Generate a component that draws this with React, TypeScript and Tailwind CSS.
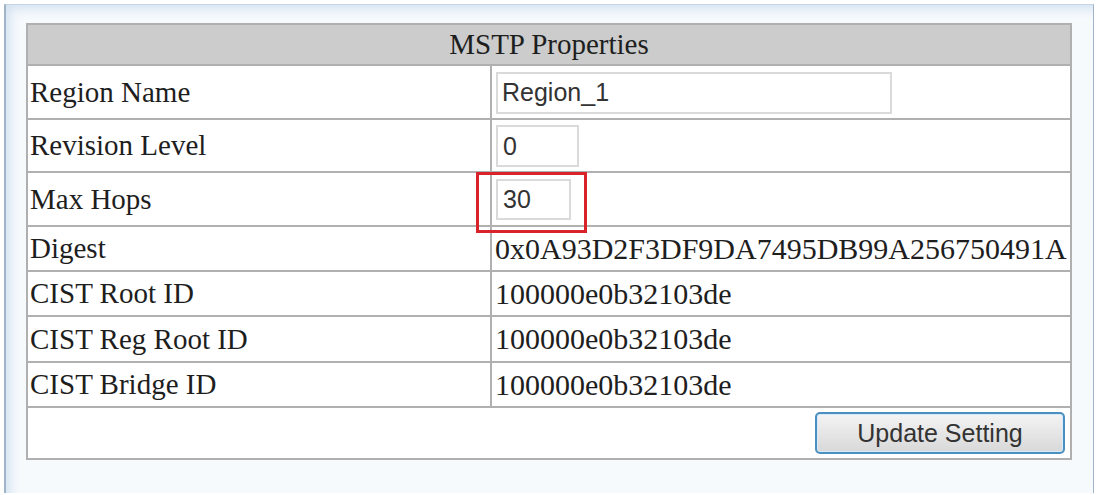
import React from "react";

const serif = "font-['Liberation_Serif','Times_New_Roman',serif]";
const sans = "font-['Liberation_Sans',Arial,sans-serif]";

type Row = { label: string; h: string; value: React.ReactNode };

export default function App() {
  const rows: Row[] = [
    {
      label: "Region Name",
      h: "h-[52px]",
      value: (
        <div className={`mt-[1px] ml-[4px] w-[396px] h-[42px] border-2 border-[#dadada] bg-white flex items-center pl-[4px] text-[25px] text-[#333] ${sans}`}>
          Region_1
        </div>
      ),
    },
    {
      label: "Revision Level",
      h: "h-[51px]",
      value: (
        <div className={`mt-[1px] ml-[4px] w-[83px] h-[42px] border-2 border-[#dadada] bg-white flex items-center pl-[5px] text-[25px] text-[#333] ${sans}`}>
          0
        </div>
      ),
    },
    {
      label: "Max Hops",
      h: "h-[52px]",
      value: (
        <div className="relative ml-[4px] mt-[1px]">
          <div className={`w-[75px] h-[41px] border-2 border-[#dadada] bg-white flex items-center pl-[5px] text-[25px] text-[#333] ${sans}`}>
            30
          </div>
          <div className="absolute left-[-20px] top-[-7px] w-[111px] h-[61px] border-[3px] border-[#d8232a]" />
        </div>
      ),
    },
    { label: "Digest", h: "h-[43px]", value: <span className="pl-[3px] text-[30px]">0x0A93D2F3DF9DA7495DB99A256750491A</span> },
    { label: "CIST Root ID", h: "h-[43px]", value: <span className="pl-[3px] text-[30px]">100000e0b32103de</span> },
    { label: "CIST Reg Root ID", h: "h-[44px]", value: <span className="pl-[3px] text-[30px]">100000e0b32103de</span> },
    { label: "CIST Bridge ID", h: "h-[43px]", value: <span className="pl-[3px] text-[30px]">100000e0b32103de</span> },
  ];

  return (
    <div className="w-[1098px] h-[495px] bg-white pt-[4px] pl-[4px] overflow-hidden">
      <div className="w-[1090px] h-[489px] border-l-2 border-t border-r border-[#9fb3c9] border-t-[#c5d4e4] bg-[#f7fafd] shadow-[inset_10px_10px_12px_-6px_#d3e1f0] pl-[20px] pt-[18px]">
        <div className={`w-[1046px] border-2 border-[#b0b0b0] bg-white text-[29px] leading-none text-[#1e1e1e] ${serif}`}>
          <div className="h-[39px] box-content bg-[#cccccc] border-b-2 border-[#b0b0b0] flex items-center justify-center">
            MSTP Properties
          </div>
          {rows.map((r) => (
            <div key={r.label} className={`flex ${r.h} box-content border-b-2 border-[#b0b0b0]`}>
              <div className="w-[464px] flex items-center pl-[2px] border-r-2 border-[#b0b0b0]">{r.label}</div>
              <div className="flex-1 flex items-center whitespace-nowrap">{r.value}</div>
            </div>
          ))}
          <div className="h-[50px] flex items-center justify-end pr-[5px]">
            <button
              className={`w-[250px] h-[42px] rounded-[5px] border-2 border-[#4b8fc0] bg-[linear-gradient(to_bottom,#f4f4f4,#e6e6e6_50%,#d8d8d8)] shadow-[inset_0_0_0_1px_#d6ecfa] text-[25px] text-[#333] leading-none ${sans}`}
            >
              Update Setting
            </button>
          </div>
        </div>
      </div>
    </div>
  );
}
